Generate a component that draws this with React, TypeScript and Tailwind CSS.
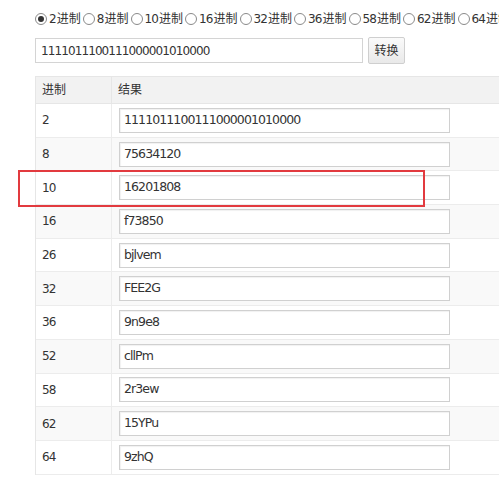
import React from "react";

const bases = ["2", "8", "10", "16", "32", "36", "58", "62", "64"];

const rows: [string, string][] = [
  ["2", "1111011100111000001010000"],
  ["8", "75634120"],
  ["10", "16201808"],
  ["16", "f73850"],
  ["26", "bjlvem"],
  ["32", "FEE2G"],
  ["36", "9n9e8"],
  ["52", "cllPm"],
  ["58", "2r3ew"],
  ["62", "15YPu"],
  ["64", "9zhQ"],
];

const font = { fontFamily: '"DejaVu Sans", "Noto Sans CJK SC", sans-serif' };

function Radio({ checked }: { checked?: boolean }) {
  return (
    <span className="inline-flex h-[12px] w-[12px] items-center justify-center rounded-full border border-[#8a8a8a] bg-white">
      {checked && <span className="h-[6px] w-[6px] rounded-full bg-[#333]" />}
    </span>
  );
}

export default function App() {
  return (
    <div
      className="relative h-[487px] w-[499px] overflow-hidden bg-white pl-[35px] text-[12px] text-[#333]"
      style={font}
    >
      {/* base selector */}
      <div className="flex h-[37px] items-center whitespace-nowrap pt-[1px]">
        {bases.map((b, i) => (
          <span key={b} className="mr-[2px] flex items-center gap-[2px]">
            <Radio checked={i === 0} />
            <span className="tracking-[-0.9px]">{b}</span>
            <span className="-ml-[1px]">进制</span>
          </span>
        ))}
      </div>

      {/* input + button */}
      <div className="flex items-center gap-[5px]">
        <div className="flex h-[25px] w-[328px] items-center border border-[#d4d4d4] pl-[5px] tracking-[-0.9px]">
          1111011100111000001010000
        </div>
        <button className="h-[27px] w-[37px] rounded-[2px] border border-[#cfcfcf] bg-gradient-to-b from-[#fafafa] to-[#e9e9e9] text-[12px] text-[#333]">
          转换
        </button>
      </div>

      {/* table */}
      <div className="mt-[12px] w-[480px] border-l border-[#e6e6e6]">
        <div className="flex h-[28px] items-center border-y border-[#e6e6e6] bg-[#f2f2f2]">
          <div className="flex h-full w-[76px] items-center border-r border-[#e6e6e6] pl-[6px]">进制</div>
          <div className="pl-[6px]">结果</div>
        </div>
        {rows.map(([b, v], i) => (
          <div
            key={b}
            className={`flex h-[33.7px] items-center border-b border-[#ececec] ${
              i % 2 === 1 ? "bg-[#f9f9f9]" : "bg-white"
            }`}
          >
            <div className="flex h-full w-[76px] items-center border-r border-[#ececec] pl-[6px] tracking-[-0.9px]">
              {b}
            </div>
            <div className="pl-[7px]">
              <div className="flex h-[25px] w-[331px] items-center border border-[#d0d0d0] bg-white pl-[4px] text-[12.5px] tracking-[-0.9px] shadow-[inset_1px_1px_1px_rgba(0,0,0,0.06)]">
                {v}
              </div>
            </div>
          </div>
        ))}
      </div>

      {/* highlight */}
      <div className="pointer-events-none absolute left-[18px] top-[170px] h-[37px] w-[407px] border-2 border-[#e23a3f]" />
    </div>
  );
}
